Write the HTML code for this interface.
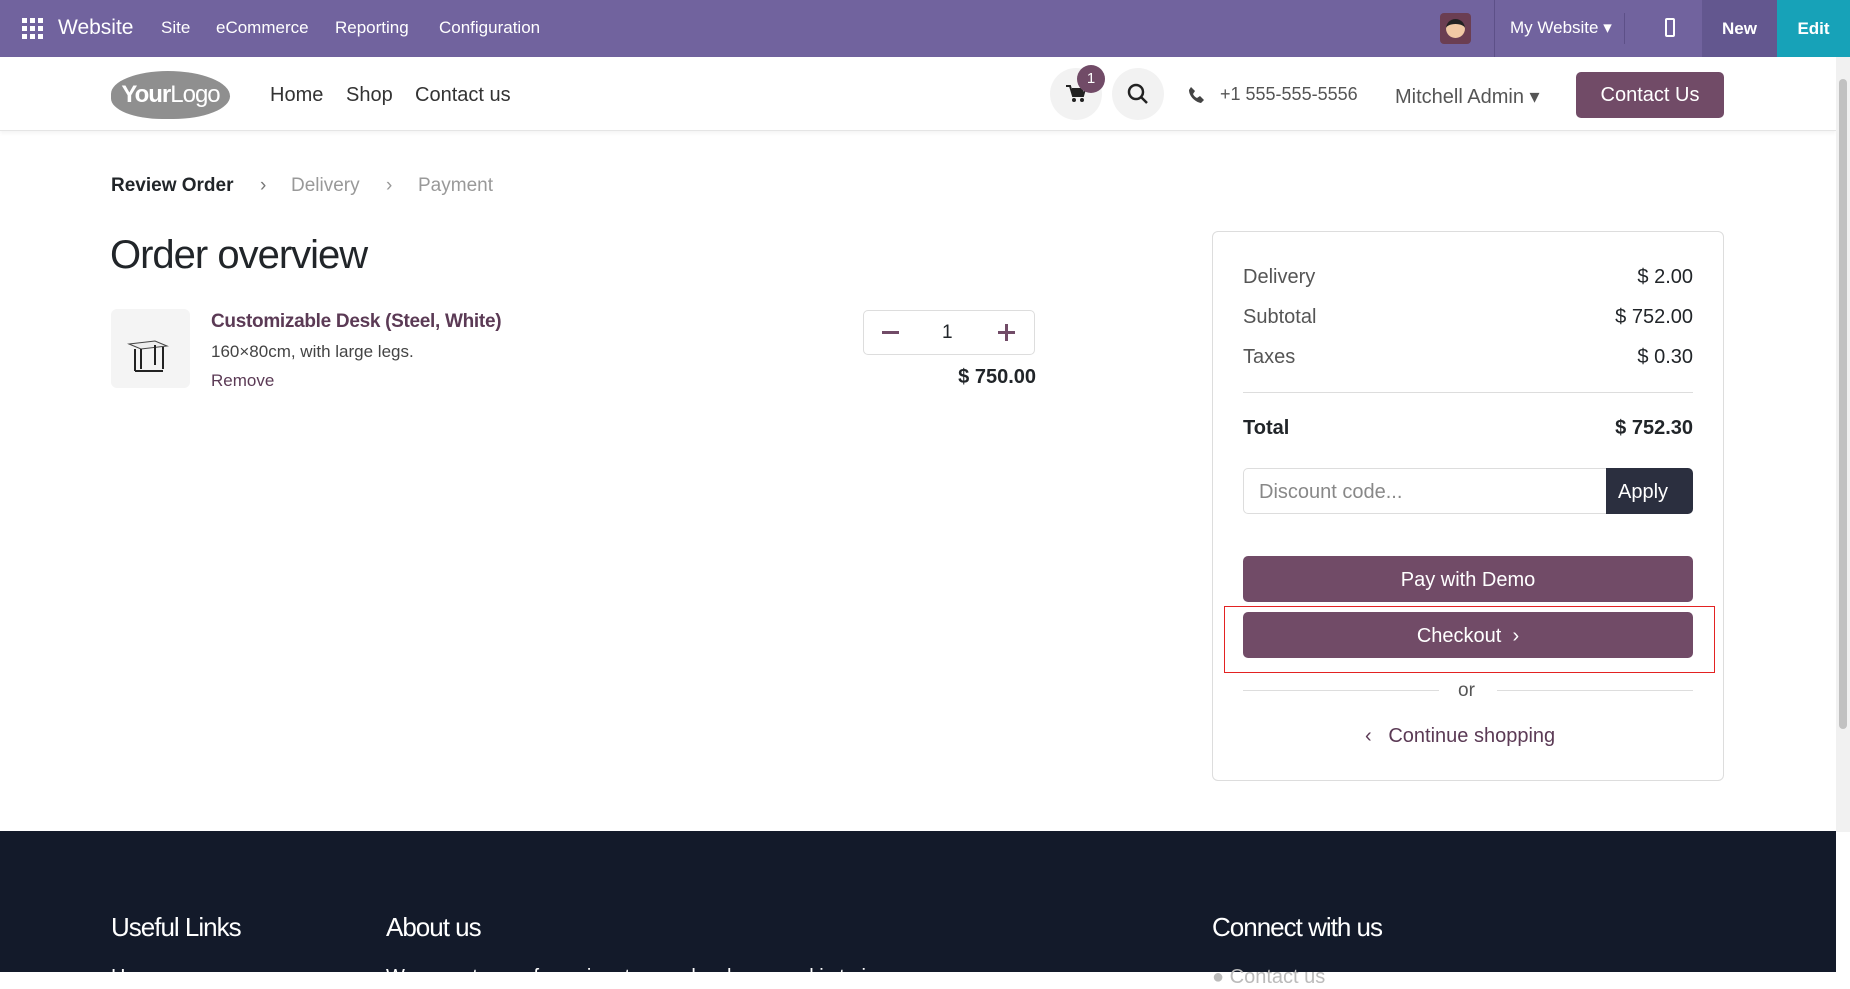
<!DOCTYPE html>
<html><head><meta charset="utf-8"><style>
*{box-sizing:border-box;margin:0;padding:0}
body{width:1850px;height:972px;overflow:hidden;font-family:"Liberation Sans",sans-serif;background:#fff;position:relative;color:#212529}
.a{position:absolute;white-space:nowrap}
.top{position:absolute;left:0;top:0;width:1850px;height:57px;background:#71639e;color:#fff}
.top .a{font-size:17px;top:18px}
.hdr{position:absolute;left:0;top:57px;width:1836px;height:74px;border-bottom:1px solid #e5e5e5;box-shadow:0 2px 4px rgba(0,0,0,.05)}
.circ{position:absolute;width:52px;height:52px;border-radius:50%;background:#f2f2f2}
.row{position:absolute;left:1243px;width:450px;font-size:20px;color:#555;display:flex;justify-content:space-between}
.row span+span{color:#212529}
.btn{position:absolute;left:1243px;width:450px;height:46px;background:#714b67;color:#fff;border-radius:5px;font-size:20px;text-align:center;line-height:46px}
</style></head><body>
<div class="top">
 <svg class="a" style="left:22px;top:18px" width="21" height="21" viewBox="0 0 21 21" fill="#fff"><rect x="0" y="0" width="5" height="5"/><rect x="8" y="0" width="5" height="5"/><rect x="16" y="0" width="5" height="5"/><rect x="0" y="8" width="5" height="5"/><rect x="8" y="8" width="5" height="5"/><rect x="16" y="8" width="5" height="5"/><rect x="0" y="16" width="5" height="5"/><rect x="8" y="16" width="5" height="5"/><rect x="16" y="16" width="5" height="5"/></svg>
 <div class="a" style="left:58px;top:16px;font-size:21px">Website</div>
 <div class="a" style="left:161px">Site</div>
 <div class="a" style="left:216px">eCommerce</div>
 <div class="a" style="left:335px">Reporting</div>
 <div class="a" style="left:439px">Configuration</div>
 <div class="a" style="left:1440px;top:13px;width:31px;height:31px;border-radius:4px;background:#6b3e52"><div style="margin:6px 6px;width:19px;height:19px;border-radius:50%;background:#f1c9a5;border-top:5px solid #222"></div></div>
 <div class="a" style="left:1494px;top:0;width:1px;height:57px;background:#5d5088"></div>
 <div class="a" style="left:1510px">My Website ▾</div>
 <div class="a" style="left:1624px;top:13px;width:1px;height:31px;background:#5d5088"></div>
 <div class="a" style="left:1665px;top:18px;width:10px;height:19px;border:2px solid #fff;border-radius:2px"></div>
 <div class="a" style="left:1702px;top:0;width:75px;height:57px;background:#63578f;text-align:center;line-height:57px;font-weight:bold">New</div>
 <div class="a" style="left:1777px;top:0;width:73px;height:57px;background:#17a2b8;text-align:center;line-height:57px;font-weight:bold">Edit</div>
</div>
<div class="hdr"></div>
<div class="a" style="left:1836px;top:57px;width:14px;height:775px;background:#f1f1f1"><div style="margin:22px 3px;width:8px;height:650px;background:#c1c1c1;border-radius:4px"></div></div>
<div class="a" style="left:111px;top:71px;width:119px;height:48px;border-radius:50% 55% 50% 45%;background:#8f8f8f;color:#fff;font-size:24px;line-height:48px;text-align:center;letter-spacing:-1px"><b>Your</b>Logo</div>
<div class="a" style="left:270px;top:84px;font-size:20px;color:#333">Home</div>
<div class="a" style="left:346px;top:84px;font-size:20px;color:#333">Shop</div>
<div class="a" style="left:415px;top:84px;font-size:20px;color:#333">Contact us</div>
<div class="circ" style="left:1050px;top:68px"></div>
<svg class="a" style="left:1066px;top:85px" width="20" height="18" viewBox="0 0 20 18" fill="#222"><path d="M0 1h4l3 10h10l2-7H6" stroke="#222" stroke-width="2" fill="none"/><rect x="6" y="5" width="11" height="5"/><circle cx="8" cy="15" r="2"/><circle cx="16" cy="15" r="2"/></svg>
<div class="a" style="left:1077px;top:65px;width:28px;height:28px;border-radius:50%;background:#714b67;color:#fff;font-size:15px;text-align:center;line-height:28px">1</div>
<div class="circ" style="left:1112px;top:68px"></div>
<svg class="a" style="left:1127px;top:83px" width="22" height="22" viewBox="0 0 22 22" fill="none" stroke="#222" stroke-width="2.5"><circle cx="9" cy="9" r="7"/><path d="M14 14l6 6"/></svg>
<svg class="a" style="left:1188px;top:86px" width="17" height="17" viewBox="0 0 17 17" fill="#444"><path d="M3 1l4 4-2 3c1 2 2 3 4 4l3-2 4 4-3 3C7 16 1 10 1 4z"/></svg>
<div class="a" style="left:1220px;top:84px;font-size:18px;color:#555">+1 555-555-5556</div>
<div class="a" style="left:1395px;top:84px;font-size:20px;color:#555">Mitchell Admin ▾</div>
<div class="a" style="left:1576px;top:72px;width:148px;height:46px;border-radius:5px;background:#714b67;color:#fff;font-size:20px;text-align:center;line-height:46px">Contact Us</div>

<div class="a" style="left:111px;top:175px;font-size:19px;font-weight:bold">Review Order</div>
<div class="a" style="left:260px;top:175px;font-size:19px;color:#777">›</div>
<div class="a" style="left:291px;top:175px;font-size:19px;color:#999">Delivery</div>
<div class="a" style="left:386px;top:175px;font-size:19px;color:#999">›</div>
<div class="a" style="left:418px;top:175px;font-size:19px;color:#999">Payment</div>
<div class="a" style="left:110px;top:233px;font-size:40px;letter-spacing:-1px">Order overview</div>
<div class="a" style="left:111px;top:309px;width:79px;height:79px;background:#f4f4f4;border-radius:6px"><svg width="79" height="79"><path d="M18 35l26-3 12 5-26 3z" fill="#eee" stroke="#444"/><path d="M24 40v22M30 40v20M52 38v22M44 36v20M24 62h28" stroke="#222" stroke-width="2" fill="none"/></svg></div>
<div class="a" style="left:211px;top:311px;font-size:19px;font-weight:bold;color:#5b3a55;letter-spacing:-.3px">Customizable Desk (Steel, White)</div>
<div class="a" style="left:211px;top:342px;font-size:17px;color:#444">160×80cm, with large legs.</div>
<div class="a" style="left:211px;top:371px;font-size:17px;color:#5b3a55">Remove</div>
<div class="a" style="left:863px;top:310px;width:172px;height:45px;border:1px solid #ddd;border-radius:5px"></div>
<div class="a" style="left:882px;top:331px;width:17px;height:3px;background:#714b67"></div>
<div class="a" style="left:942px;top:322px;font-size:19px">1</div>
<div class="a" style="left:998px;top:331px;width:17px;height:3px;background:#714b67"></div>
<div class="a" style="left:1005px;top:324px;width:3px;height:17px;background:#714b67"></div>
<div class="a" style="left:952px;top:366px;font-size:20px;font-weight:bold;width:84px;text-align:right">$ 750.00</div>

<div class="a" style="left:1212px;top:231px;width:512px;height:550px;border:1px solid #ddd;border-radius:6px"></div>
<div class="row" style="top:266px"><span>Delivery</span><span>$ 2.00</span></div>
<div class="row" style="top:306px"><span>Subtotal</span><span>$ 752.00</span></div>
<div class="row" style="top:346px"><span>Taxes</span><span>$ 0.30</span></div>
<div class="a" style="left:1243px;top:392px;width:450px;height:1px;background:#ddd"></div>
<div class="row" style="top:417px;font-weight:bold"><span style="color:#212529">Total</span><span>$ 752.30</span></div>
<div class="a" style="left:1243px;top:468px;width:370px;height:46px;border:1px solid #ddd;border-radius:5px 0 0 5px;font-size:20px;color:#888;padding:12px 15px">Discount code...</div>
<div class="a" style="left:1606px;top:468px;width:87px;height:46px;background:#2b2f3f;border-radius:0 5px 5px 0;color:#fff;font-size:20px;line-height:48px;padding-left:12px">Apply</div>
<div class="btn" style="top:556px;line-height:48px">Pay with Demo</div>
<div class="btn" style="top:612px;line-height:48px">Checkout &nbsp;›</div>
<div class="a" style="left:1224px;top:606px;width:491px;height:67px;border:1.5px solid #e32222"></div>
<div class="a" style="left:1243px;top:690px;width:196px;height:1px;background:#ddd"></div>
<div class="a" style="left:1497px;top:690px;width:196px;height:1px;background:#ddd"></div>
<div class="a" style="left:1458px;top:680px;font-size:19px;color:#555">or</div>
<div class="a" style="left:1365px;top:725px;font-size:20px;color:#5b3a55">‹ &nbsp;&nbsp;Continue shopping</div>

<div class="a" style="left:0;top:831px;width:1836px;height:141px;background:#131a2a"></div>
<div class="a" style="left:111px;top:912px;font-size:26px;color:#fff;letter-spacing:-1px">Useful Links</div>
<div class="a" style="left:386px;top:912px;font-size:26px;color:#fff;letter-spacing:-1px">About us</div>
<div class="a" style="left:1212px;top:912px;font-size:26px;color:#fff;letter-spacing:-1px">Connect with us</div>
<div class="a" style="left:386px;top:966px;font-size:20px;color:#fff">We are a team of passionate people whose goal is to improve</div>
<div class="a" style="left:111px;top:966px;font-size:20px;color:#fff">Home</div>
<div class="a" style="left:1212px;top:966px;font-size:20px;color:#bbb">● Contact us</div>
</body></html>
